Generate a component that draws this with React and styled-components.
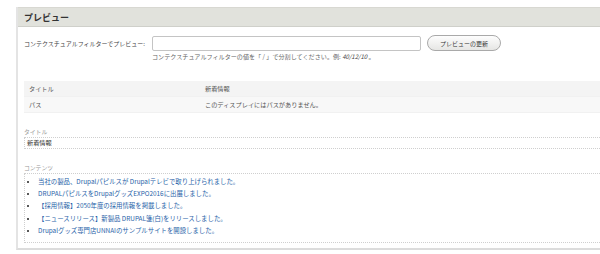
import React from "react";
import styled, { createGlobalStyle } from "styled-components";

const GlobalStyle = createGlobalStyle`
  html, body {
    margin: 0;
    padding: 0;
    background: #fff;
    overflow: hidden;
  }
  body {
    font-family: "Noto Sans CJK JP", "Noto Sans", sans-serif;
    color: #333;
  }
`;

const news = [
  "当社の製品、Drupalパピルスが Drupalテレビで取り上げられました。",
  "DRUPALパピルスをDrupalグッズEXPO2016に出展しました。",
  "【採用情報】2050年度の採用情報を掲載しました。",
  "【ニュースリリース】新製品 DRUPAL箋(白)をリリースしました。",
  "Drupalグッズ専門店UNNAIのサンプルサイトを開設しました。",
];

const Page = styled.div`
  padding: 7px 0 0 16px;
`;

const Panel = styled.section`
  width: 600px;
  height: 243px;
  border-left: 2px solid #e4e4e4;
  border-bottom: 2px solid #dcdcdc;
  box-sizing: border-box;
  background: #fff;
`;

const Header = styled.h2`
  margin: 0;
  height: 20px;
  line-height: 20px;
  padding-left: 6px;
  background: #e1e2dc;
  border-top: 1px solid #d8d8d2;
  border-bottom: 1px solid #cfd0ca;
  box-sizing: border-box;
  font-size: 9px;
  font-weight: bold;
  color: #333;
`;

const Body = styled.div`
  padding: 8px 0 0 6px;
`;

const FormRow = styled.div`
  display: flex;
  align-items: center;
  height: 16px;
`;

const Label = styled.label`
  font-size: 6px;
  color: #444;
  width: 128px;
  white-space: nowrap;
`;

const Input = styled.div`
  width: 269px;
  height: 15px;
  border: 1px solid #c4c4c4;
  border-radius: 2px;
  box-sizing: border-box;
  background: #fff;
`;

const Button = styled.button`
  margin-left: 6px;
  width: 74px;
  height: 16px;
  border: 1px solid #a9a9a9;
  border-radius: 8px;
  background: linear-gradient(#fdfdfd, #e6e6e4);
  font-family: inherit;
  font-size: 6px;
  color: #333;
  padding: 0;
`;

const Description = styled.div`
  margin: 1px 0 0 128px;
  font-size: 6.1px;
  color: #666;
  line-height: 10px;

  em {
    font-style: italic;
    color: #444;
  }
`;

const Table = styled.div`
  margin-top: 19px;
  display: flex;
  flex-direction: column;
`;

const Row = styled.div`
  display: grid;
  grid-template-columns: 176px 1fr;
  height: 15px;
  align-items: center;
  background: ${(p) => (p.$odd ? "#f4f4f4" : "#f8f8f8")};
  border-bottom: 1px solid #f1f1f1;
  font-size: 6.2px;
  color: #555;
  padding-left: 5px;
`;

const FieldLabel = styled.div`
  margin-top: ${(p) => p.$top}px;
  font-size: 5.8px;
  color: #999;
  line-height: 9px;
`;

const FieldBox = styled.div`
  margin-top: 1px;
  border: 1px dotted #cfcfcf;
  border-right: none;
  padding: 0 0 0 2px;
  font-size: 6.2px;
  color: #333;
  line-height: 10px;
`;

const List = styled.ul`
  margin: 0;
  padding: 2px 0 5px 11px;
  list-style: disc;

  li {
    font-size: 6.4px;
    line-height: 12.2px;
    color: #222;
  }

  a {
    color: #1f5fa8;
    text-decoration: none;
  }
`;

export default function App() {
  return (
    <>
      <GlobalStyle />
      <Page>
        <Panel>
          <Header>プレビュー</Header>
          <Body>
            <FormRow>
              <Label>コンテクスチュアルフィルターでプレビュー:</Label>
              <Input />
              <Button>プレビューの更新</Button>
            </FormRow>
            <Description>
              コンテクスチュアルフィルターの値を「 / 」で分割してください。例: <em>40/12/10</em> 。
            </Description>
            <Table>
              <Row $odd>
                <div>タイトル</div>
                <div>新着情報</div>
              </Row>
              <Row>
                <div>パス</div>
                <div>このディスプレイにはパスがありません。</div>
              </Row>
            </Table>
            <FieldLabel $top={14}>タイトル</FieldLabel>
            <FieldBox>新着情報</FieldBox>
            <FieldLabel $top={14}>コンテンツ</FieldLabel>
            <FieldBox>
              <List>
                {news.map((n) => (
                  <li key={n}>
                    <a href="#">{n}</a>
                  </li>
                ))}
              </List>
            </FieldBox>
          </Body>
        </Panel>
      </Page>
    </>
  );
}
